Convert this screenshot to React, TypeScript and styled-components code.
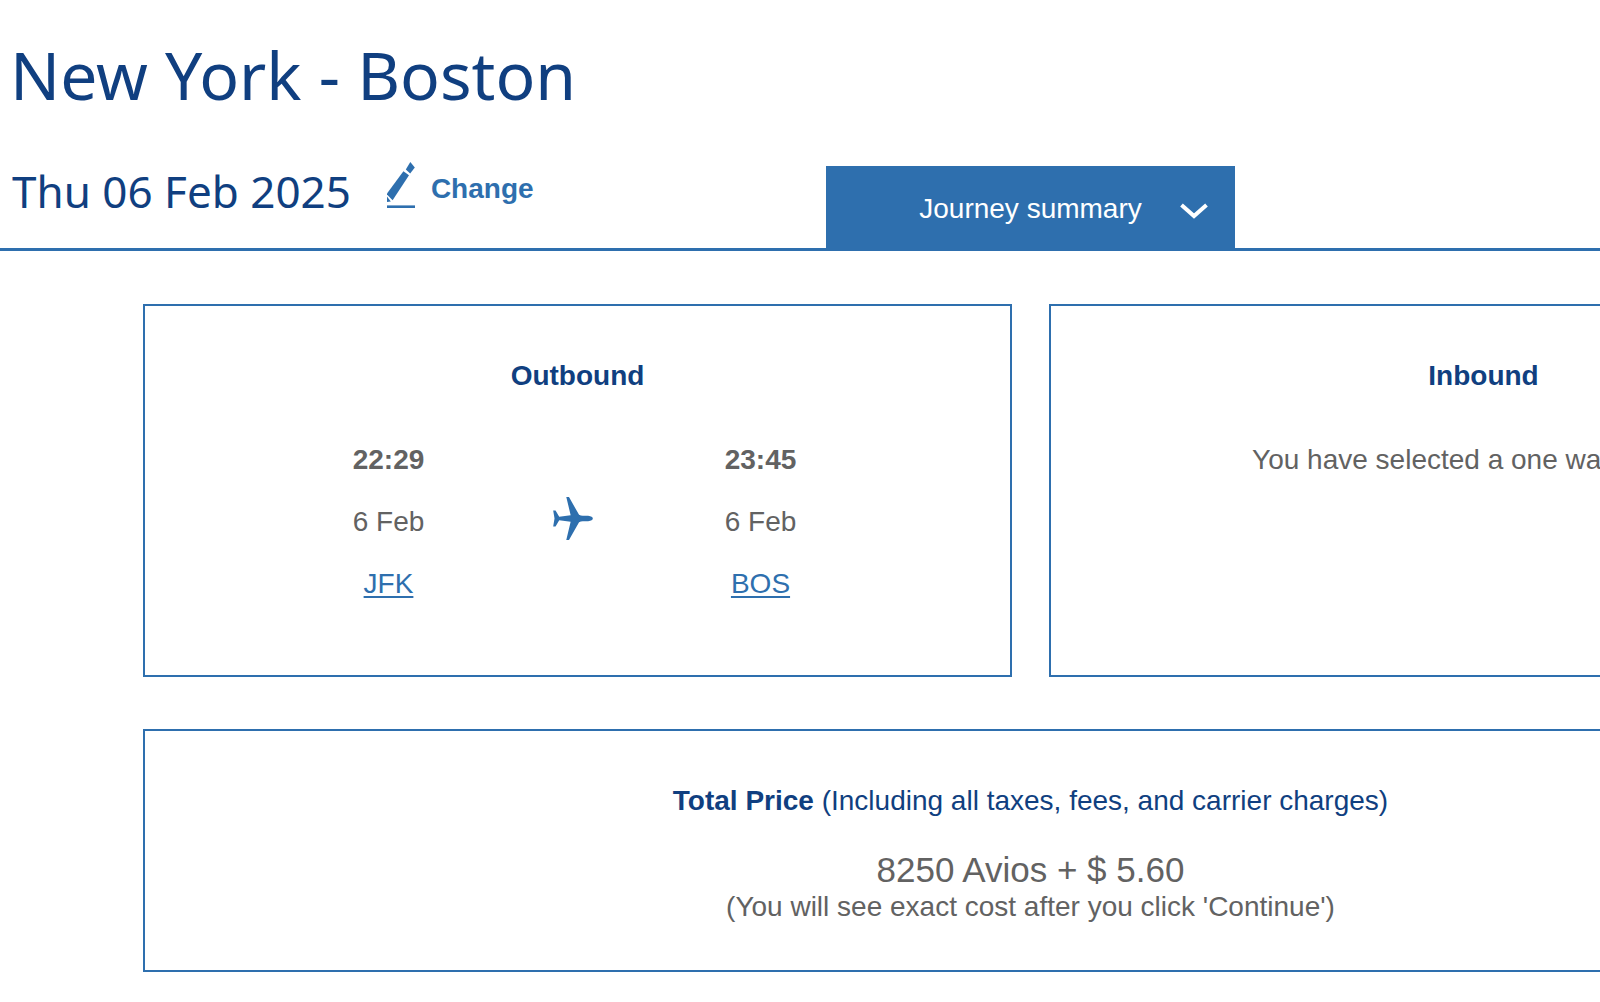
import React from "react";
import styled, { createGlobalStyle } from "styled-components";

const navy = "#103f80";
const blue = "#2e6fae";
const grey = "#626262";

const GlobalStyle = createGlobalStyle`
  *, *::before, *::after { box-sizing: border-box; }
  html { overflow-x: hidden; }
  body {
    margin: 0;
    background: #fff;
    color: ${grey};
    font: 28px/32px "Liberation Sans", Arial, sans-serif;
  }
  h1, h2, h3, p { margin: 0; }
`;

const Page = styled.main`
  min-width: 2061px;
`;

const Title = styled.h1`
  padding: 26px 10px 0;
  color: ${navy};
  font: 400 66px/96px "Noto Sans", sans-serif;
`;

const SearchBar = styled.header`
  display: grid;
  grid-template-columns: 1fr 409px 1fr;
  margin-top: 35px;
  border-bottom: 3px solid ${blue};
`;

const Trip = styled.div`
  display: flex;
  align-items: flex-start;
  padding-left: 12px;
`;

const TravelDate = styled.h2`
  color: ${navy};
  font: 400 44px/68px "Noto Sans", sans-serif;
`;

const ChangeLink = styled.a`
  display: flex;
  align-items: flex-end;
  gap: 16px;
  height: 52px;
  margin-left: 36px;
  color: ${blue};
  font-weight: 700;
  line-height: 40px;
  text-decoration: none;
`;

const SummaryToggle = styled.button`
  display: grid;
  grid-template-columns: 1fr auto 1fr;
  align-items: center;
  height: 82px;
  margin-top: 9px;
  padding: 3px 27px 0;
  border: 0;
  background: ${blue};
  color: #fff;
  font: inherit;
  cursor: pointer;

  span { grid-column: 2; }
  svg { justify-self: end; margin-top: 4px; }
`;

const Summary = styled.section`
  display: grid;
  grid-template-columns: 1fr 1fr;
  gap: 52px 37px;
  padding: 53px 143px;
`;

const Card = styled.article<{ $wide?: boolean }>`
  grid-column: ${(p) => (p.$wide ? "1 / -1" : "auto")};
  min-height: ${(p) => (p.$wide ? 243 : 373)}px;
  padding-top: 54px;
  border: 2px solid ${blue};
  text-align: center;
`;

const CardTitle = styled.h3<{ $gap: number }>`
  margin-bottom: ${(p) => p.$gap}px;
  color: ${navy};
  font-size: 28px;
  line-height: 32px;
`;

const Light = styled.span`
  font-weight: 400;
`;

const Flight = styled.div`
  display: grid;
  grid-template-columns: 186px 186px 186px;
  justify-content: center;
  justify-items: center;
  align-items: center;
  padding-right: 6px;

  > svg { margin: 0 4px 8px 0; color: ${blue}; }
`;

const Stop = styled.div`
  display: grid;
  gap: 30px;
`;

const Airport = styled.a`
  color: ${blue};
  text-decoration-thickness: 2px;
  text-underline-offset: 3px;
`;

const Price = styled.p`
  font-size: 35px;
  line-height: 42px;
`;

const PencilIcon = () => (
  <svg width="28" height="48" viewBox="0 0 28 48" fill="currentColor" aria-hidden="true">
    <path d="M23.3 1 27.8 6.4 23.2 12.6 18.8 8.4Z" />
    <path d="M16.4 10.2 22 14.2 5.6 39.2 0 33.4V32.4Z" />
    <path d="M0 35.5 3.8 40.4 0 41Z" />
    <path d="M0 44.4H28V47H0Z" />
  </svg>
);

const ChevronIcon = () => (
  <svg width="28" height="16" viewBox="0 0 28 16" fill="none" stroke="currentColor" strokeWidth="4" aria-hidden="true">
    <path d="M1.5 2 14 13 26.5 2" />
  </svg>
);

const PlaneIcon = () => (
  <svg width="40" height="43" viewBox="0 0 118 128" fill="currentColor" aria-hidden="true">
    <path d="M39 0H47L77 53Q82 56 88 56H104Q118 58 118 64T104 72H88Q82 72 77 75L47 128H39L52 74L18 69L7 88H0L4 64L0 40H7L18 59L52 54Z" />
  </svg>
);

const stops = [
  { time: "22:29", date: "6 Feb", airport: "JFK" },
  { time: "23:45", date: "6 Feb", airport: "BOS" },
];

const FlightStop = ({ time, date, airport }: (typeof stops)[number]) => (
  <Stop>
    <strong>{time}</strong>
    <span>{date}</span>
    <span>
      <Airport href={`#${airport}`}>{airport}</Airport>
    </span>
  </Stop>
);

export default function App() {
  return (
    <>
      <GlobalStyle />
      <Page>
        <Title>New York - Boston</Title>
        <SearchBar>
          <Trip>
            <TravelDate>Thu 06 Feb 2025</TravelDate>
            <ChangeLink href="#change">
              <PencilIcon />
              Change
            </ChangeLink>
          </Trip>
          <SummaryToggle type="button">
            <span>Journey summary</span>
            <ChevronIcon />
          </SummaryToggle>
        </SearchBar>
        <Summary>
          <Card>
            <CardTitle $gap={52}>Outbound</CardTitle>
            <Flight>
              <FlightStop {...stops[0]} />
              <PlaneIcon />
              <FlightStop {...stops[1]} />
            </Flight>
          </Card>
          <Card>
            <CardTitle $gap={52}>Inbound</CardTitle>
            <p>You have selected a one way journey</p>
          </Card>
          <Card $wide>
            <CardTitle $gap={32}>
              Total Price <Light>(Including all taxes, fees, and carrier charges)</Light>
            </CardTitle>
            <Price>8250 Avios + $ 5.60</Price>
            <p>(You will see exact cost after you click 'Continue')</p>
          </Card>
        </Summary>
      </Page>
    </>
  );
}
